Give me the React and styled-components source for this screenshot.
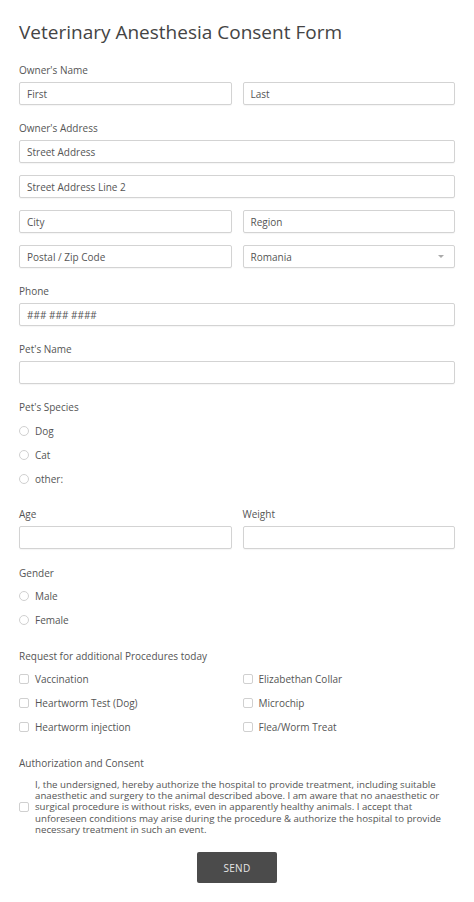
import React from 'react'
import styled, { createGlobalStyle } from 'styled-components'

const GlobalStyle = createGlobalStyle`
  body {
    margin: 0;
    background: #fff;
    font-family: "Open Sans", "Noto Sans", sans-serif;
    color: #555;
  }
`

const Page = styled.div`
  width: 436px;
  padding: 19px 19px 20px;
`

const Title = styled.h1`
  margin: 0 0 18px;
  font-size: 19px;
  line-height: 26px;
  font-weight: 400;
  color: #444;
`

const Group = styled.div`
  margin-top: ${(p) => p.$top || 16}px;
`

const Label = styled.div`
  font-size: 10px;
  line-height: 14px;
  color: #555;
  margin-bottom: ${(p) => p.$bottom || 5}px;
`

const Stack = styled.div`
  display: flex;
  flex-direction: column;
  gap: 12px;
`

const Row = styled.div`
  display: grid;
  grid-template-columns: 1fr 1fr;
  column-gap: 11px;
`

const Input = styled.div`
  box-sizing: border-box;
  height: 23px;
  border: 1px solid #d3d3d3;
  border-radius: 2px;
  box-shadow: 0 1px 1px rgba(0, 0, 0, 0.04);
  padding: 0 7px;
  display: flex;
  align-items: center;
  justify-content: space-between;
  font-size: 10px;
  color: #555;
  background: #fff;
`

const Caret = styled.span`
  width: 0;
  height: 0;
  border-left: 3px solid transparent;
  border-right: 3px solid transparent;
  border-top: 3px solid #aaa;
  margin-right: 3px;
`

const Options = styled.div`
  display: grid;
  grid-template-columns: ${(p) => (p.$cols === 2 ? '1fr 1fr' : '1fr')};
  column-gap: 11px;
`

const Option = styled.div`
  height: 24px;
  display: flex;
  align-items: center;
  gap: 6px;
  font-size: 10px;
  color: #555;
`

const Radio = styled.span`
  box-sizing: border-box;
  width: 10px;
  height: 10px;
  border: 1px solid #d0d0d0;
  border-radius: 50%;
  flex: none;
`

const Box = styled.span`
  box-sizing: border-box;
  width: 10px;
  height: 10px;
  border: 1px solid #d0d0d0;
  border-radius: 2px;
  flex: none;
`

const Consent = styled.div`
  display: flex;
  align-items: center;
  gap: 6px;
  margin-top: 9px;
`

const ConsentText = styled.div`
  font-size: 9.7px;
  line-height: 11.2px;
  color: #555;
  white-space: nowrap;
`

const Actions = styled.div`
  display: flex;
  justify-content: center;
  margin-top: 17px;
`

const Send = styled.button`
  width: 80px;
  height: 31px;
  border: none;
  border-radius: 2px;
  background: #4b4b4b;
  color: #e6e6e6;
  font-family: inherit;
  font-size: 10px;
  letter-spacing: 0.3px;
`

const Field = ({ label, children, top }) => (
  <Group $top={top}>
    <Label>{label}</Label>
    {children}
  </Group>
)

const App = () => (
  <Page>
    <GlobalStyle />
    <Title>Veterinary Anesthesia Consent Form</Title>

    <Field label="Owner's Name" top={7}>
      <Row>
        <Input>First</Input>
        <Input>Last</Input>
      </Row>
    </Field>

    <Field label="Owner's Address">
      <Stack>
        <Input>Street Address</Input>
        <Input>Street Address Line 2</Input>
        <Row>
          <Input>City</Input>
          <Input>Region</Input>
        </Row>
        <Row>
          <Input>Postal / Zip Code</Input>
          <Input>
            Romania
            <Caret />
          </Input>
        </Row>
      </Stack>
    </Field>

    <Field label="Phone">
      <Input>### ### ####</Input>
    </Field>

    <Field label="Pet's Name">
      <Input />
    </Field>

    <Group>
      <Label $bottom={5}>Pet's Species</Label>
      <Options>
        <Option><Radio />Dog</Option>
        <Option><Radio />Cat</Option>
        <Option><Radio />other:</Option>
      </Options>
    </Group>

    <Group>
      <Row>
        <div>
          <Label>Age</Label>
          <Input />
        </div>
        <div>
          <Label>Weight</Label>
          <Input />
        </div>
      </Row>
    </Group>

    <Group $top={17}>
      <Label $bottom={4}>Gender</Label>
      <Options>
        <Option><Radio />Male</Option>
        <Option><Radio />Female</Option>
      </Options>
    </Group>

    <Group $top={17}>
      <Label $bottom={4}>Request for additional Procedures today</Label>
      <Options $cols={2}>
        <Option><Box />Vaccination</Option>
        <Option><Box />Elizabethan Collar</Option>
        <Option><Box />Heartworm Test (Dog)</Option>
        <Option><Box />Microchip</Option>
        <Option><Box />Heartworm injection</Option>
        <Option><Box />Flea/Worm Treat</Option>
      </Options>
    </Group>

    <Group $top={17}>
      <Label $bottom={0}>Authorization and Consent</Label>
      <Consent>
        <Box />
        <ConsentText>
          I, the undersigned, hereby authorize the hospital to provide treatment, including suitable
          <br />
          anaesthetic and surgery to the animal described above. I am aware that no anaesthetic or
          <br />
          surgical procedure is without risks, even in apparently healthy animals. I accept that
          <br />
          unforeseen conditions may arise during the procedure &amp; authorize the hospital to provide
          <br />
          necessary treatment in such an event.
        </ConsentText>
      </Consent>
    </Group>

    <Actions>
      <Send>SEND</Send>
    </Actions>
  </Page>
)

export default App
